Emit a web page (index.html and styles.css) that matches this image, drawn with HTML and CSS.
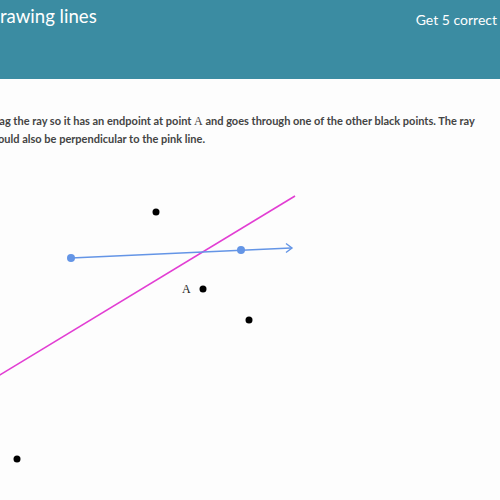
FILE: index.html
```html
<!DOCTYPE html>
<html lang="en">
<head>
    <meta charset="UTF-8">
    <title>Drawing lines</title>
    <link rel="stylesheet" href="styles.css">
</head>
<body>
    <header class="top-bar">
        <h1 class="title">Drawing lines</h1>
        <div class="goal">Get 5 correct</div>
    </header>

    <p class="prompt">Drag the ray so it has an endpoint at point <span class="math">A</span> and goes through one of the other black points. The ray should also be perpendicular to the pink line.</p>

    <svg class="graph" width="500" height="330" viewBox="0 0 500 330">
        <!-- pink line -->
        <line x1="-10" y1="211" x2="295" y2="26" stroke="#e23ed3" stroke-width="1.6"/>
        <!-- ray -->
        <line x1="71" y1="88" x2="291" y2="78" stroke="#6495e6" stroke-width="1.6"/>
        <polyline points="286,73.5 292,78 286,82.5" fill="none" stroke="#6495e6" stroke-width="1.4"/>
        <circle cx="71" cy="88" r="4" fill="#6495e6"/>
        <circle cx="241" cy="80" r="4" fill="#6495e6"/>
        <!-- black points -->
        <circle cx="156" cy="42" r="3.5" fill="#000"/>
        <circle cx="203" cy="119" r="3.5" fill="#000"/>
        <circle cx="249" cy="150" r="3.5" fill="#000"/>
        <circle cx="17" cy="289" r="3.5" fill="#000"/>
        <text x="182" y="123" class="label">A</text>
    </svg>
</body>
</html>
```

FILE: styles.css
```css
* {
    box-sizing: border-box;
    margin: 0;
    padding: 0;
}

body {
    font-family: Lato, 'Open Sans', sans-serif;
    background-color: #fdfdfd;
    color: #444;
    overflow: hidden;
}

.top-bar {
    height: 79px;
    background-color: #3b8ca2;
    color: #fff;
    display: flex;
    justify-content: space-between;
    align-items: flex-start;
    padding: 4px 3px 0 0;
}

.title {
    font-size: 18.6px;
    font-weight: 400;
    margin-left: -14px;
    line-height: 24px;
}

.goal {
    font-size: 14px;
    margin-top: 7px;
}

.prompt {
    margin: 33px 0 0 -13px;
    width: 500px;
    font-size: 11px;
    font-weight: 700;
    line-height: 17px;
    color: #444;
}

.math {
    font-family: 'Liberation Serif', serif;
    font-weight: 400;
    font-size: 12px;
}

.graph {
    display: block;
    margin-top: 23px;
}

.label {
    font-family: 'Liberation Serif', serif;
    font-size: 12px;
    font-weight: 400;
    fill: #222;
}
```
